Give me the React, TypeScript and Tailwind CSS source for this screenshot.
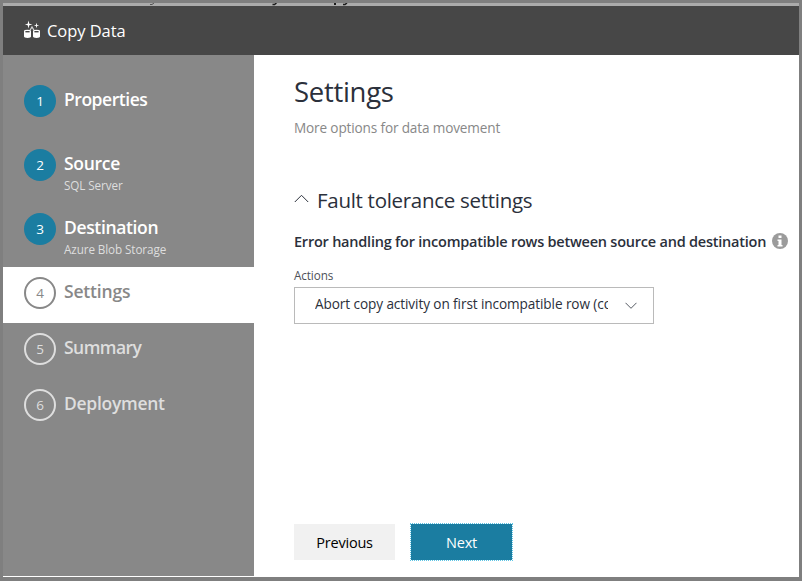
import React from "react";

type Step = {
  n: number;
  label: string;
  sub?: string;
  state: "done" | "current" | "todo";
  tracking: string;
};

const steps: Step[] = [
  { n: 1, label: "Properties", state: "done", tracking: "tracking-[-0.46px]" },
  { n: 2, label: "Source", sub: "SQL Server", state: "done", tracking: "tracking-[-0.3px]" },
  { n: 3, label: "Destination", sub: "Azure Blob Storage", state: "done", tracking: "tracking-[-0.36px]" },
  { n: 4, label: "Settings", state: "current", tracking: "tracking-[-0.18px]" },
  { n: 5, label: "Summary", state: "todo", tracking: "tracking-[-0.55px]" },
  { n: 6, label: "Deployment", state: "todo", tracking: "tracking-[-0.28px]" },
];

const rowStyle = {
  done: "h-16 text-white",
  current: "h-14 bg-white text-[#888888]",
  todo: "h-14 text-[#dedede]",
};

const circleStyle = {
  done: "bg-[#1b7da1] text-white",
  current: "border-2 border-[#888888]",
  todo: "border-2 border-[#dedede]",
};

function CopyDataIcon() {
  return (
    <svg width="18" height="20" viewBox="0 0 18 20" className="block shrink-0">
      <g fill="#ffffff">
        <path d="M4.5 0.5 L5.3 3.7 L8.5 4.5 L5.3 5.3 L4.5 8.5 L3.7 5.3 L0.9 4.5 L3.7 3.7 Z" />
        <path d="M12.5 2.8 L13.1 4.9 L15.2 5.5 L13.1 6.1 L12.5 8.2 L11.9 6.1 L9.8 5.5 L11.9 4.9 Z" />
        <path d="M0 11.2 Q0 9.8 3.4 9.8 Q7 9.8 7 11.2 V16.6 Q7 18 3.5 18 Q0 18 0 16.6 Z" />
        <path d="M9 11.2 Q9 9.8 12.5 9.8 Q16 9.8 16 11.2 V16.6 Q16 18 12.5 18 Q9 18 9 16.6 Z" />
      </g>
      <rect x="1.4" y="11" width="4.2" height="1.4" fill="#474747" />
      <rect x="10.4" y="11" width="4.2" height="1.4" fill="#474747" />
      <path d="M6 10.2 L8 7 L10 10.2" fill="none" stroke="#d4d4d4" strokeWidth="1.2" />
    </svg>
  );
}

export default function App() {
  return (
    <div className="flex h-[581px] w-[802px] flex-col overflow-hidden border-x-[3px] border-t-[3px] border-b-[4px] border-[#7f7f7f] bg-white font-['Open_Sans','Noto_Sans',sans-serif]">
      <div className="h-[3px] shrink-0 bg-[#ababab]">
        <svg width="360" height="3" viewBox="0 0 360 3" className="block">
          <path d="M147 1.5 H149 L151 0" fill="none" stroke="#555" strokeWidth="1" />
          <path d="M269.500 1.500 H271.500 L273.500 0 M340 1.500 H342 L344 0" fill="none" stroke="#1c1c1c" strokeWidth="1.5" />
          <rect x="331" y="0" width="2" height="2" fill="#1c1c1c" />
        </svg>
      </div>
      <header className="flex h-[49px] shrink-0 items-start bg-[#474747] pl-[21px] text-white">
        <div className="pt-[14px]">
          <CopyDataIcon />
        </div>
        <h1 className="ml-[5px] pt-[13px] text-[16.5px] leading-6 tracking-[-0.06px]">Copy Data</h1>
      </header>
      <div className="flex min-h-0 flex-1">
        <nav className="mb-[1px] w-[251px] shrink-0 bg-[#888888] pt-5">
          {steps.map((s) => (
            <div key={s.n} className={`flex pt-[10px] pl-[21px] ${rowStyle[s.state]}`}>
              <div
                className={`flex size-8 shrink-0 items-center justify-center rounded-full pt-[1px] text-[13.5px] ${circleStyle[s.state]}`}
              >
                {s.n}
              </div>
              <div className="ml-2 whitespace-nowrap">
                <div className={`pt-[2px] text-[17.5px] leading-6 font-semibold ${s.tracking}`}>{s.label}</div>
                {s.sub && (
                  <div className="pt-[2px] text-[11.7px] leading-4 tracking-[-0.1px] text-[#dedede]">{s.sub}</div>
                )}
              </div>
            </div>
          ))}
        </nav>
        <main className="flex min-w-0 flex-1 flex-col items-start pl-10 whitespace-nowrap text-[#2b303b]">
          <h2 className="mt-[17px] text-[27.5px] leading-10 tracking-[-0.3px]">Settings</h2>
          <p className="mt-[6px] text-[13.6px] leading-5 tracking-[-0.15px] text-[#888888]">
            More options for data movement
          </p>
          <div className="mt-[46px] flex h-8 items-start">
            <svg width="15" height="10" viewBox="0 0 15 10" className="mt-[10px] block">
              <path d="M0.8 8 L7.5 1.3 L14.2 8" fill="none" stroke="#2b303b" strokeWidth="1" />
            </svg>
            <h3 className="ml-[8px] text-[20.5px] leading-8 tracking-[-0.29px]">Fault tolerance settings</h3>
          </div>
          <div className="mt-[14px] flex h-6 items-start">
            <h4 className="w-[478px] text-[14.5px] leading-6 font-semibold tracking-[-0.225px]">
              Error handling for incompatible rows between source and destination
            </h4>
            <svg width="16" height="16" viewBox="0 0 16 16" className="mt-[3px] block">
              <circle cx="8" cy="8" r="8" fill="#9b9b9b" />
              <path d="M6.5 2.5 H9.5 V5 H6.5 Z M5.5 6.5 H9.5 V12 H10.5 V13.5 H5.5 V12 H6.5 V8 H5.5 Z" fill="#fff" />
            </svg>
          </div>
          <label className="mt-[11px] text-[11.7px] leading-5 tracking-[-0.1px] text-[#4c5058]">Actions</label>
          <div className="mt-[2px] flex h-[37px] w-[360px] items-start border border-[#bababa] pl-5">
            <div className="w-[293px] overflow-hidden pt-[4px] text-[13.6px] leading-6 tracking-[-0.09px]">
              Abort copy activity on first incompatible row (compatible rows will be copied)
            </div>
            <svg width="12" height="8" viewBox="0 0 12 8" className="mt-[14px] ml-[17px] block">
              <path d="M0.5 0.8 L6 6.3 L11.5 0.8" fill="none" stroke="#555a63" strokeWidth="1" />
            </svg>
          </div>
          <div className="mt-[199px] flex items-start gap-[15px]">
            <button className="mt-[1px] h-9 w-[101px] bg-[#f1f1f1] pt-[1px] text-[14.5px] tracking-[-0.2px] text-black">
              Previous
            </button>
            <button className="h-[38px] w-[103px] border border-dotted border-[#5fc4e4] bg-[#1b7da1] bg-clip-padding pt-[1px] text-[14.5px] tracking-[-0.2px] text-white">
              Next
            </button>
          </div>
        </main>
      </div>
    </div>
  );
}
